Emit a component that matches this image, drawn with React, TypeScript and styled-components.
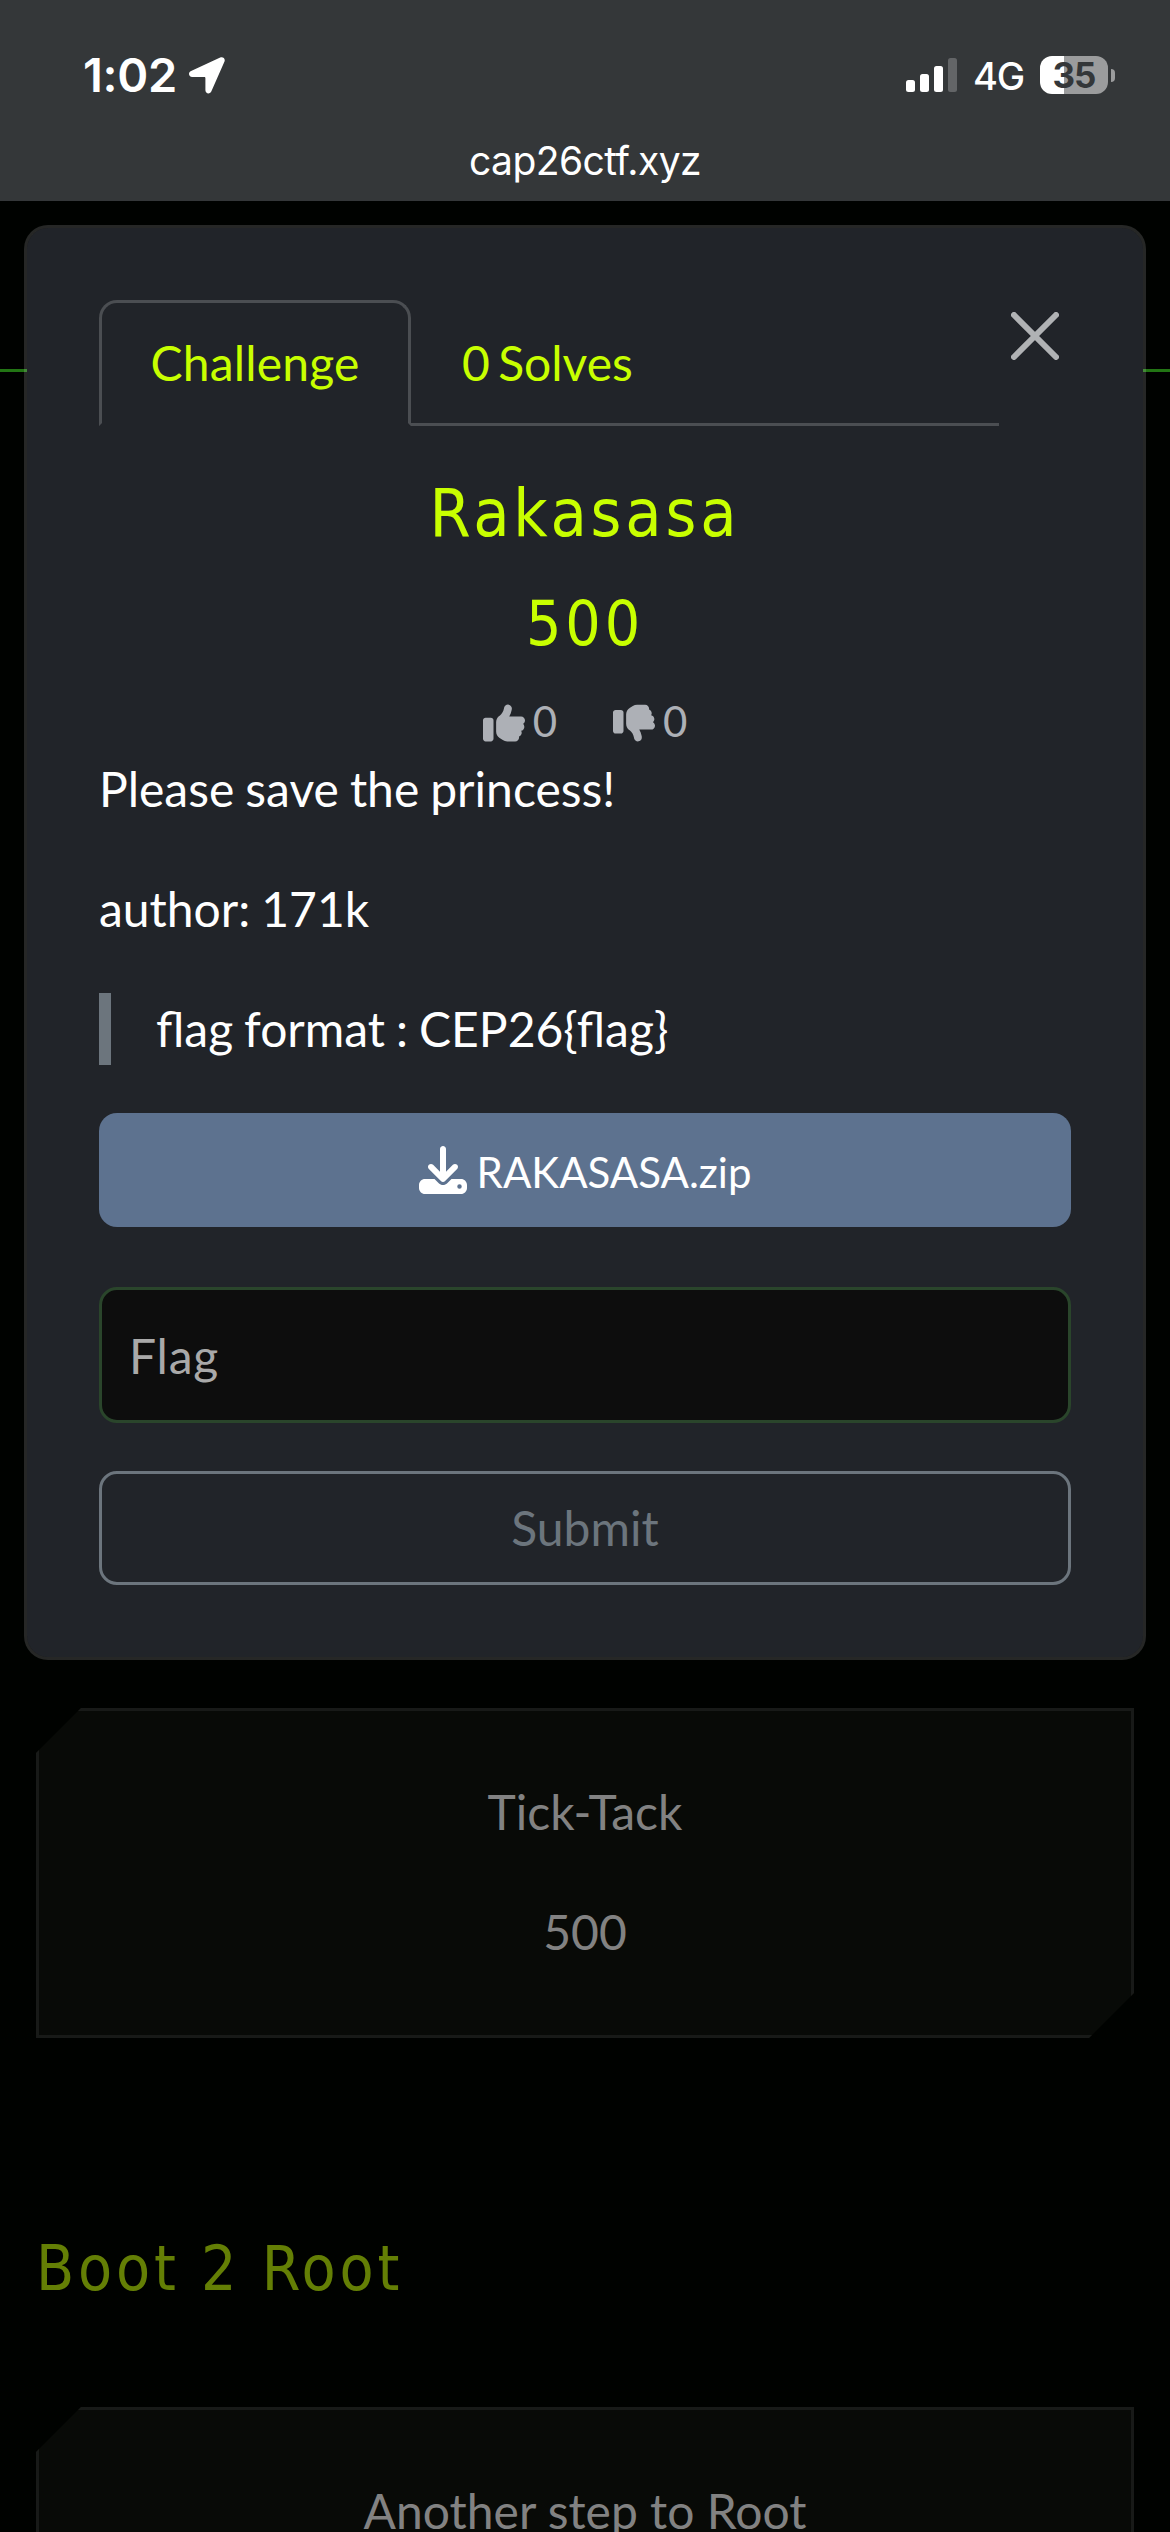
import React from "react";
import styled, { createGlobalStyle, css } from "styled-components";
import { FaDownload, FaThumbsDown, FaThumbsUp } from "react-icons/fa6";

const lime = "#c8ff00";
const chrome = "#343739";
const display = `"DejaVu Sans Condensed", "DejaVu Sans", sans-serif`;
const system = `Inter, "Liberation Sans", sans-serif`;

const GlobalStyle = createGlobalStyle`
  *, *::before, *::after { box-sizing: border-box; }
  body {
    margin: 0;
    background: #000200;
    color: #fff;
    font: 400 48px/72px Lato, "Liberation Sans", sans-serif;
  }
  button, input { font: inherit; margin: 0; }
  h1, h2, p, blockquote { margin: 0; font-weight: 400; }
`;

const Screen = styled.div`
  position: relative;
  width: 1170px;
  height: 2532px;
  overflow: hidden;
  display: flex;
  flex-direction: column;
`;

const BrowserBar = styled.header`
  flex: none;
  height: 201px;
  background: ${chrome};
  font-family: ${system};
`;

const StatusRow = styled.div`
  display: flex;
  justify-content: space-between;
  align-items: center;
  height: 132px;
  padding: 18px 55px 0 83px;
`;

const StatusGroup = styled.div<{ $gap: number }>`
  display: flex;
  align-items: center;
  gap: ${(p) => p.$gap}px;
`;

const Clock = styled.span`
  font-size: 47px;
  font-weight: 600;
  letter-spacing: -0.3px;
`;

const Network = styled.span`
  font-size: 38px;
  font-weight: 500;
  line-height: 40px;
  letter-spacing: -1.2px;
  padding-top: 2px;
`;

const BatteryWrap = styled.div`
  display: flex;
  align-items: center;
  gap: 3px;
`;

const Battery = styled.div`
  width: 68px;
  height: 38px;
  border-radius: 12px;
  background: linear-gradient(90deg, #fff 24px, #9b9c9d 24px);
  color: ${chrome};
  font-size: 35px;
  font-weight: 700;
  line-height: 38px;
  letter-spacing: -1px;
  text-align: center;
`;

const BatteryNub = styled.div`
  width: 4px;
  height: 13px;
  border-radius: 0 4px 4px 0;
  background: #9b9c9d;
`;

const Address = styled.div`
  height: 58px;
  line-height: 58px;
  font-size: 39px;
  letter-spacing: -0.55px;
  text-align: center;
`;

const Page = styled.main`
  flex: 1;
  display: flex;
  flex-direction: column;
`;

const SiteNav = styled.div`
  flex: none;
  height: 171px;
  border-bottom: 3px solid #227514;
`;

const Board = styled.section`
  display: flex;
  flex-direction: column;
  padding: 1336px 36px 0;
`;

const ChallengeTile = styled.article`
  flex: none;
  height: 330px;
  padding: 65px 0 0;
  display: flex;
  flex-direction: column;
  gap: 48px;
  align-items: center;
  border: 3px solid #181a18;
  background: #080a07;
  color: #828282;
  clip-path: polygon(45px 0, 100% 0, 100% calc(100% - 45px), calc(100% - 45px) 100%, 0 100%, 0 45px);
`;

const Category = styled.h2`
  margin: 193px 0 101px;
  height: 75px;
  line-height: 75px;
  font-family: ${display};
  font-size: 62px;
  letter-spacing: 3.8px;
  color: #647f05;
`;

const Modal = styled.div`
  position: absolute;
  left: 24px;
  top: 225px;
  width: 1122px;
  height: 1435px;
  padding: 72px;
  border: 3px solid rgba(255, 255, 255, 0.15);
  border-radius: 24px;
  background: #212429;
  background-clip: padding-box;
  display: flex;
  flex-direction: column;
`;

const ModalHead = styled.div`
  display: flex;
  justify-content: space-between;
  padding-right: 12px;
`;

const Tabs = styled.div`
  display: flex;
  width: 900px;
  height: 126px;
  border-bottom: 3px solid #4b4e52;
`;

const Tab = styled.button<{ $active?: boolean }>`
  height: 126px;
  padding: 24px 48px;
  border: 3px solid transparent;
  border-radius: 18px 18px 0 0;
  background: none;
  color: ${lime};
  white-space: nowrap;
  word-spacing: -4px;
  ${(p) =>
    p.$active &&
    css`
      min-width: 312px;
      letter-spacing: 0.2px;
      background: #212429;
      border-color: #4b4e52 #4b4e52 #212429;
    `}
`;

const CloseButton = styled.button`
  width: 48px;
  height: 48px;
  margin-top: 12px;
  padding: 0;
  border: 0;
  background: none;
  color: #b0b2b4;
  svg { display: block; }
`;

const Title = styled.h1<{ $size: number; $line: number }>`
  font-family: ${display};
  font-size: ${(p) => p.$size}px;
  line-height: ${(p) => p.$line}px;
  height: ${(p) => p.$line}px;
  letter-spacing: 3.8px;
  color: ${lime};
  text-align: center;
`;

const Heading = styled.div`
  padding-top: 32px;
  display: flex;
  flex-direction: column;
`;

const Votes = styled.div`
  display: flex;
  justify-content: center;
  gap: 56px;
  height: 63px;
  margin-top: 12px;
`;

const Vote = styled.span`
  display: flex;
  align-items: center;
  gap: 8px;
  font-size: 42px;
  line-height: 63px;
  color: #adb0b6;
  svg { margin-top: 2px; }
`;

const Description = styled.div`
  display: flex;
  flex-direction: column;
  gap: 48px;
  word-spacing: -1.3px;
`;

const Quote = styled.blockquote`
  border-left: 12px solid #6c757d;
  padding-left: 45px;
`;

const FileButton = styled.button`
  display: flex;
  justify-content: center;
  align-items: center;
  gap: 10px;
  height: 114px;
  margin-top: 48px;
  border: 0;
  border-radius: 18px;
  background: #5d728f;
  color: #fff;
  font-size: 42px;
`;

const FileName = styled.span`
  padding-top: 3px;
`;

const FlagInput = styled.input`
  height: 136px;
  margin-top: 60px;
  padding: 0 27px;
  border: 3px solid #2a452b;
  border-radius: 18px;
  background: #0d0d0d;
  color: #fff;
  letter-spacing: 0.8px;
  outline: 0;
  &::placeholder { color: #a9a9a9; opacity: 1; }
`;

const SubmitButton = styled.button`
  height: 114px;
  margin-top: 48px;
  border: 3px solid #6c757d;
  border-radius: 18px;
  background: none;
  color: #6c757d;
`;

const LocationArrow = () => (
  <svg width="36" height="37" viewBox="0 0 36 37" fill="#fff">
    <path d="M31.2.5C34 -.6 36.500 1.600 35.500 4.600L22.400 34.300C21.100 37.600 16.400 36.900 16.400 33.300V21.200C16.400 20.500 16 20.100 15.300 20.100H3.200C-.4 20.100 -1.200 15.500 2.100 14.100Z" />
  </svg>
);

const SignalBars = () => (
  <svg width="51" height="34" viewBox="0 0 51 34" fill="#fff">
    <rect x="0" y="22" width="9" height="12" rx="2.500" />
    <rect x="14" y="16" width="9" height="18" rx="2.500" />
    <rect x="28" y="8" width="9" height="26" rx="2.500" />
    <rect x="42" y="0" width="9" height="34" rx="2.500" fill="#636567" />
  </svg>
);

export default function App() {
  return (
    <>
      <GlobalStyle />
      <Screen>
        <BrowserBar>
          <StatusRow>
            <StatusGroup $gap={12}>
              <Clock>1:02</Clock>
              <LocationArrow />
            </StatusGroup>
            <StatusGroup $gap={16}>
              <SignalBars />
              <Network>4G</Network>
              <BatteryWrap>
                <Battery>35</Battery>
                <BatteryNub />
              </BatteryWrap>
            </StatusGroup>
          </StatusRow>
          <Address>cap26ctf.xyz</Address>
        </BrowserBar>
        <Page>
          <SiteNav />
          <Board>
            <ChallengeTile>
              <p>Tick-Tack</p>
              <p>500</p>
            </ChallengeTile>
            <Category>Boot 2 Root</Category>
            <ChallengeTile>
              <p>Another step to Root</p>
            </ChallengeTile>
          </Board>
        </Page>
        <Modal role="dialog">
          <ModalHead>
            <Tabs>
              <Tab $active>Challenge</Tab>
              <Tab>0 Solves</Tab>
            </Tabs>
            <CloseButton aria-label="Close">
              <svg width="48" height="48" viewBox="0 0 48 48" stroke="currentColor" strokeWidth="6" strokeLinecap="round">
                <path d="M3 3 45 45M45 3 3 45" />
              </svg>
            </CloseButton>
          </ModalHead>
          <Heading>
            <Title $size={66} $line={112}>Rakasasa</Title>
            <Title $size={62} $line={108}>500</Title>
          </Heading>
          <Votes>
            <Vote><FaThumbsUp />0</Vote>
            <Vote><FaThumbsDown />0</Vote>
          </Votes>
          <Description>
            <p>Please save the princess!</p>
            <p>author: 171k</p>
            <Quote>flag format : CEP26{"{flag}"}</Quote>
          </Description>
          <FileButton>
            <FaDownload size={48} />
            <FileName>RAKASASA.zip</FileName>
          </FileButton>
          <FlagInput placeholder="Flag" />
          <SubmitButton>Submit</SubmitButton>
        </Modal>
      </Screen>
    </>
  );
}
